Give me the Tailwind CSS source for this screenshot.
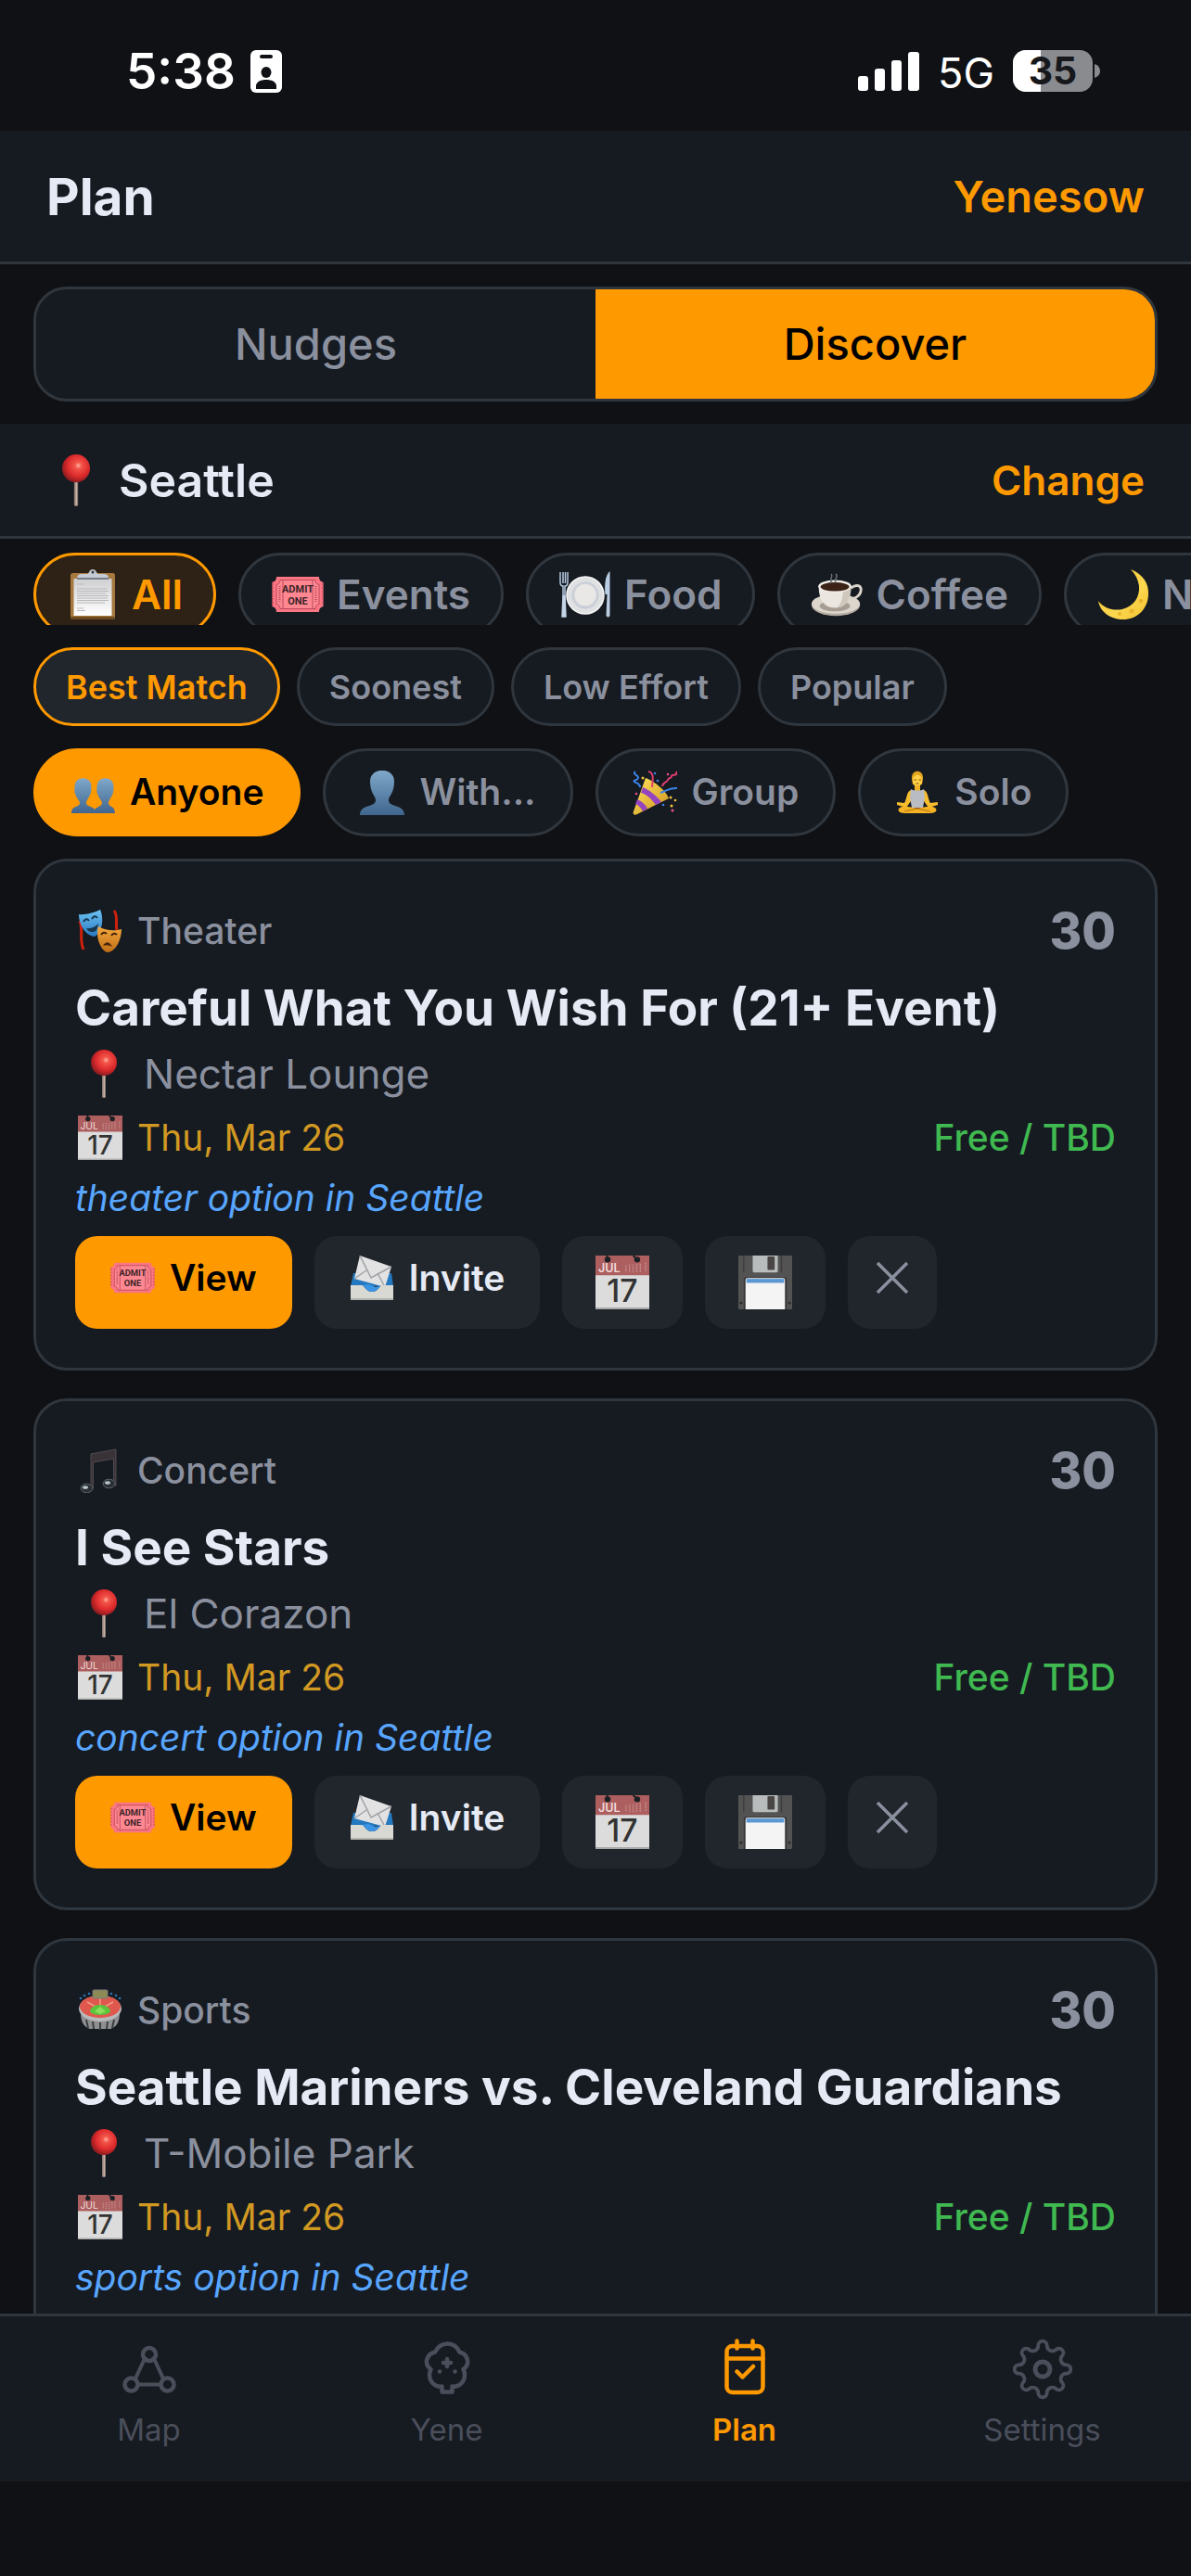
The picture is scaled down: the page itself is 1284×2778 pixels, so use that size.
<!DOCTYPE html>
<html lang="en">
<head>
  <meta charset="UTF-8" />
  <meta name="viewport" content="width=device-width, initial-scale=1" />
  <title>Plan - Discover</title>
  <script src="https://cdn.jsdelivr.net/npm/@tailwindcss/browser@4"></script>
  <style>
    body { font-family: Inter, 'Liberation Sans', sans-serif; }
  </style>
</head>
<body class="bg-[#0f1115] text-[#e6eaf4] h-screen flex flex-col overflow-hidden">

  <!-- Icon sprite -->
  <svg class="absolute size-0" aria-hidden="true">
    <defs>
      <radialGradient id="gPin" cx="0.58" cy="0.4" r="0.6">
        <stop offset="0" stop-color="#ffb3a0" /><stop offset="0.2" stop-color="#f4554a" /><stop offset="0.65" stop-color="#dc2a2c" /><stop offset="1" stop-color="#8f1c20" />
      </radialGradient>
      <linearGradient id="gBust" x1="0" y1="0" x2="0" y2="1"><stop offset="0" stop-color="#7fa8ca" /><stop offset="1" stop-color="#40658e" /></linearGradient>
      <linearGradient id="gMoon" x1="0" y1="0" x2="1" y2="1"><stop offset="0" stop-color="#f2b92c" /><stop offset="0.6" stop-color="#fcd84f" /><stop offset="1" stop-color="#f3c02f" /></linearGradient>
      <linearGradient id="gCone" x1="0" y1="0" x2="1" y2="1"><stop offset="0" stop-color="#ffe45c" /><stop offset="1" stop-color="#cf9420" /></linearGradient>
      <linearGradient id="gPaper" x1="0" y1="0" x2="0" y2="1"><stop offset="0" stop-color="#cfcfd2" /><stop offset="1" stop-color="#ffffff" /></linearGradient>
      <linearGradient id="gBlue" x1="0" y1="0" x2="0" y2="1"><stop offset="0" stop-color="#6cc4f5" /><stop offset="1" stop-color="#2a78bf" /></linearGradient>
      <linearGradient id="gGold" x1="0" y1="0" x2="0" y2="1"><stop offset="0" stop-color="#f4a93c" /><stop offset="1" stop-color="#c06d18" /></linearGradient>
    </defs>

    <symbol id="pin" viewBox="0 0 56 54">
      <rect x="26" y="26" width="4" height="27" rx="1.500" fill="#8d7b74" />
      <rect x="27.500" y="28" width="1.500" height="24" fill="#c9b3a6" />
      <circle cx="28" cy="15" r="14" fill="url(#gPin)" />
    </symbol>

    <symbol id="clipboard" viewBox="0 0 56 56">
      <rect x="4" y="5" width="48" height="50" rx="2.500" fill="#a6793f" />
      <rect x="4" y="52" width="48" height="3" rx="1" fill="#6f4b20" />
      <rect x="7.500" y="11" width="41" height="40" fill="url(#gPaper)" />
      <g stroke="#b9b9bd" stroke-width="1"><path d="M11 17h8M11 22h32M11 24.500h34M11 27h31M11 29.500h34M11 32h33M11 34.500h34M11 37h30M11 43h7M11 45.500h9" /></g>
      <path d="M11 11c0-4 2-5 6-5h5c2 0 2-5 6-5s4 5 6 5h5c4 0 6 1 6 5z" fill="#c5cad4" />
      <path d="M11 11h34" stroke="#5c6470" stroke-width="1.500" />
      <circle cx="28" cy="4" r="1.500" fill="#32353a" />
    </symbol>

    <symbol id="plate" viewBox="0 0 56 52">
      <circle cx="28" cy="27" r="20" fill="#dfe0e1" />
      <circle cx="28" cy="27" r="20" fill="none" stroke="#f7f7f7" stroke-width="1.500" />
      <circle cx="28" cy="27" r="14" fill="#d0d4da" stroke="#bfc8d4" />
      <circle cx="28" cy="26.500" r="11.500" fill="#e9e8e6" />
      <path d="M1 2v11q0 4 3 4v10l-1 23h4l-1-23V17q3 0 3-4V2M4 2v12M6.500 2v12" fill="none" stroke="#b7cbe2" stroke-width="1.500" />
      <path d="M3.500 27h3l.5 22q-2 3-4 0z" fill="#c5d4e6" />
      <path d="M54.500 1c-5 4-6 15-5 25h2l-1 23q2 3 4 0z" fill="#b9cde3" />
    </symbol>

    <symbol id="coffee" viewBox="0 0 58 50">
      <ellipse cx="28" cy="37" rx="27" ry="12" fill="#b5aca2" />
      <ellipse cx="28" cy="35.500" rx="27" ry="11" fill="#dcd6cd" />
      <ellipse cx="27" cy="38" rx="17" ry="6" fill="#a79d92" />
      <path d="M45 18c6-5 12-3 11 3s-7 9-14 9" fill="none" stroke="#d9d3ca" stroke-width="3" />
      <path d="M9 16c0 14 5 24 18 24s18-10 18-24z" fill="#ebe7e0" />
      <path d="M36 20c0 9-2 16-7 20 11-1 16-10 16-24z" fill="#cfc7bc" />
      <ellipse cx="27" cy="16" rx="18.500" ry="7" fill="#f1eee9" />
      <ellipse cx="27" cy="16.500" rx="16" ry="5" fill="#3b2116" />
      <path d="M24 12c-5-4 2-5-1-10M28 12c-3-4 4-6 0-10" fill="none" stroke="#6d7176" stroke-width="1.500" />
    </symbol>

    <symbol id="moon" viewBox="0 0 56 56">
      <path d="M36 1C49 6 56 16 55 29 54 45 42 55 28 55 14 55 3 47 1 35 7 43 17 46 27 44 39 41 46 31 45 19 44 12 41 6 36 1Z" fill="url(#gMoon)" />
      <circle cx="47" cy="35" r="2" fill="#e5ad28" /><circle cx="37" cy="46" r="2.500" fill="#e9b42c" /><circle cx="24" cy="49" r="2" fill="#e9b42c" />
    </symbol>

    <symbol id="people" viewBox="0 0 48 48">
      <path d="M1 46c0-9 9-6 9-11 0-3-3-4-5-10-1-2-1-10 1-13 3-5 12-5 15 0 2 3 2 11 0 14-2 5-4 6-4 9 0 5 10 2 10 11z" fill="url(#gBust)" />
      <path d="M25 46c0-8 9-6 9-11 0-3-3-4-5-10-1-2-1-10 1-13 3-5 12-5 15 0 2 3 2 11 0 14-2 5-4 6-4 9 0 5 7 2 7 11z" fill="url(#gBust)" />
    </symbol>

    <symbol id="person" viewBox="0 0 48 48">
      <path d="M0 48c0-12 17-8 17-16 0-4-3-5-5-12-1-5-2-11 1-15 4-7 18-7 22 0 3 4 2 10 1 15-2 7-5 8-5 12 0 8 17 4 17 16z" fill="url(#gBust)" />
    </symbol>

    <symbol id="party" viewBox="0 0 48 48">
      <path d="M14 8C21 10 36 21 39 30L5 47C1 49 0 46 1 44Z" fill="url(#gCone)" />
      <path d="M11 18C17 20 28 29 31 34L25 37C20 30 14 25 9 24ZM5 31C10 33 15 38 16 41L11 44C9 40 6 37 3 36Z" fill="#9444bf" />
      <path d="M3 1c-4 3 4 4 3 7s-6 2-4 4 6 1 6 6M30 24c5-1 9-6 18-5" fill="none" stroke="#3b83e8" stroke-width="2" />
      <path d="M17 1c6 1 5 8 4 17M47 1c2 6-5 2-5 5s-3 1-4 4-5 2-6 7" fill="none" stroke="#e23e6e" stroke-width="2" />
      <g fill="#f5c23c"><circle cx="11" cy="8" r="1.500" /><circle cx="41" cy="29" r="1.500" /><circle cx="42" cy="38" r="1.500" /><circle cx="46" cy="32" r="1.300" /></g>
      <g fill="#e85187"><circle cx="4" cy="25" r="1.300" /><circle cx="38" cy="4" r="1.300" /><circle cx="43" cy="43" r="1.500" /></g>
      <g fill="#3b83e8"><circle cx="24" cy="3" r="1.300" /><circle cx="27" cy="11" r="1.300" /><circle cx="33" cy="37" r="1.300" /></g>
    </symbol>

    <symbol id="lotus" viewBox="0 0 48 48">
      <path d="M18 9c-1-11 13-11 12 0l-1 6H19z" fill="#e3a51d" />
      <ellipse cx="24" cy="11" rx="5" ry="6.500" fill="#ffcf45" />
      <path d="M21 16h6v6h-6z" fill="#edb126" />
      <path d="M17 21c-5 2-4 9-7 14l-8-1v3l10 3 7-10zM31 21c5 2 4 9 7 14l8-1v3l-10 3-7-10z" fill="#f8bd2d" />
      <path d="M17 20c3 2 11 2 14 0l1 9-2 11H18l-2-11z" fill="#b9bcc2" />
      <path d="M4 41c3-4 13-2 20 0 7-2 17-4 20 0 2 4-3 5-8 5H12c-5 0-10-1-8-5z" fill="#f5b426" />
      <path d="M10 44l14-3 14 3" fill="none" stroke="#c98514" stroke-width="1.500" />
      <path d="M20.500 10h2.500M25.500 10h2.500M22.500 14h3" stroke="#7a4b10" stroke-width="1" />
    </symbol>

    <symbol id="masks" viewBox="0 0 48 48">
      <path d="M2 13c4 10-1 20 4 31M39 2c5 7 1 15 3 21" fill="none" stroke="#cf200c" stroke-width="3" />
      <path d="M1 6c7 1 17-2 23-5 4 9 3 24-6 29C8 29 1 17 1 6Z" fill="url(#gBlue)" />
      <path d="M6 14q3-5 6-1M15 11q3-5 6-1" fill="none" stroke="#173650" stroke-width="2" />
      <path d="M9 21q8 1 13-5-1 10-7 9-4 0-6-4z" fill="#173650" />
      <path d="M22 19c8 5 18 5 25 3 0 11-6 25-16 25-8-4-12-18-9-28Z" fill="url(#gGold)" />
      <path d="M25 28q3-4 6-1M36 29q3-4 6-1" fill="none" stroke="#472309" stroke-width="2" />
      <path d="M27 40q5-8 10 1-5-3-10-1z" fill="#472309" />
    </symbol>

    <symbol id="note" viewBox="0 0 48 48">
      <path d="M14 6L41 1v39h-2.500V11L16.500 15v28H14z" fill="#393338" stroke="#5b5359" stroke-width="0.800" />
      <ellipse cx="9.500" cy="43" rx="6.500" ry="4.800" fill="#2b3036" stroke="#5e6268" />
      <ellipse cx="33.500" cy="38" rx="6.500" ry="4.800" fill="#2b3036" stroke="#5e6268" />
      <ellipse cx="8" cy="42" rx="3" ry="1.800" fill="#b9c6ce" /><ellipse cx="32" cy="37" rx="3" ry="1.800" fill="#b9c6ce" />
    </symbol>

    <symbol id="stadium" viewBox="0 0 48 48">
      <path d="M3 26c0 10 3 16 10 18h22c7-2 10-8 10-18z" fill="#8e8f91" />
      <path d="M9 34l2 9M16 36l1 8M24 37v8M32 36l-1 8M39 34l-2 9" stroke="#3c3e41" stroke-width="2" />
      <ellipse cx="24" cy="22" rx="23" ry="14" fill="#b8b9ba" />
      <ellipse cx="24" cy="20" rx="22" ry="12" fill="#e0574d" />
      <path d="M10 15l9 5M38 15l-9 5M24 9v9" stroke="#f39b85" stroke-width="1.500" />
      <path d="M13 26c0-5 5-8 11-8s11 3 11 8c-5 4-17 4-22 0z" fill="#5cc33c" />
      <path d="M24 20l6 5-6 3-6-3z" fill="#8cdc5d" />
      <rect x="16" y="2" width="16" height="9" rx="1" fill="#8c8b56" stroke="#77787a" />
      <g fill="#2e74b8"><circle cx="3" cy="11" r="1.300" /><circle cx="7" cy="8" r="1.300" /><circle cx="12" cy="6" r="1.300" /><circle cx="45" cy="11" r="1.300" /><circle cx="41" cy="8" r="1.300" /><circle cx="36" cy="6" r="1.300" /></g>
    </symbol>

    <symbol id="floppy" viewBox="0 0 60 60">
      <rect width="60" height="60" rx="1" fill="#535353" />
      <path d="M6 0v19M48 0v19" stroke="#3d3d3d" stroke-width="1.500" />
      <path d="M16 0h28v17q0 2-2 2H18q-2 0-2-2z" fill="#b9bcbd" />
      <rect x="32.500" y="1" width="8" height="15" rx="1" fill="#4a4645" />
      <path d="M6 60V27q0-3 3-3h42q3 0 3 3v33z" fill="#363636" />
      <path d="M8 60V27q0-2 2-2h40q2 0 2 2v33z" fill="#f4f4f5" />
      <rect x="9" y="26" width="42" height="4.500" fill="#5b98d3" />
      <circle cx="3" cy="53" r="1.500" fill="#2c2c2c" /><circle cx="57" cy="53" r="1.500" fill="#2c2c2c" />
    </symbol>

    <symbol id="envelope" viewBox="0 0 48 48">
      <path d="M4 19h41l2 14H1z" fill="#2478bf" />
      <path d="M11 0L45 12 38 34 5 25Z" fill="#e2e2e3" />
      <path d="M11 0l12 24 22-12M5 25l13-9M38 34l-8-15" fill="none" stroke="#9fa1a5" stroke-width="1.500" />
      <path d="M1 32h12c3 0 4 7 11 7s8-7 11-7h12v16H1z" fill="#d9d9d4" />
      <path d="M13 32c3 0 4 7 11 7s8-7 11-7l-7 2-8-3z" fill="#3b95e4" />
      <path d="M1 47h46" stroke="#a9a9a3" stroke-width="1.500" />
    </symbol>
  </svg>

  <!-- Status bar -->
  <div class="h-[141px] shrink-0 flex items-center justify-between pt-3 pl-[136px] pr-[98px] text-white">
    <div class="flex items-center gap-4">
      <span class="text-[53px] leading-[64px] font-semibold">5:38</span>
      <svg class="w-[34px] h-[46px]" viewBox="0 0 34 46">
        <rect width="34" height="46" rx="6" fill="#fff" />
        <rect x="10" y="5" width="14" height="4" rx="2" fill="#0f1115" />
        <ellipse cx="17" cy="24" rx="5.500" ry="6" fill="#0f1115" />
        <path d="M6 42V38C7 34 11 32 17 32s10 2 11 6v4z" fill="#0f1115" />
      </svg>
    </div>
    <div class="flex items-center">
      <svg class="w-[66px] h-[42px]" viewBox="0 0 66 42" fill="#fff">
        <rect y="26" width="11" height="16" rx="3" /><rect x="18" y="18" width="11" height="24" rx="3" /><rect x="36" y="9" width="11" height="33" rx="3" /><rect x="54" width="12" height="42" rx="3" />
      </svg>
      <span class="ml-5 pt-1 text-[45px] leading-[54px]">5G</span>
      <svg class="ml-5 w-[94px] h-[45px]" viewBox="0 0 94 45">
        <clipPath id="cell"><rect width="86" height="45" rx="14" /></clipPath>
        <g clip-path="url(#cell)"><rect width="86" height="45" fill="#8a8b8e" /><rect width="30" height="45" fill="#fff" /></g>
        <path d="M88 15q6 2 6 7.500t-6 7.500z" fill="#8a8b8e" />
        <text x="43" y="37" text-anchor="middle" font-family="Inter, sans-serif" font-size="41" font-weight="700" fill="#17181c">35</text>
      </svg>
    </div>
  </div>

  <!-- Header -->
  <header class="shrink-0 h-36 px-[50px] flex items-center justify-between bg-[#161b22] border-b-3 border-[#30363d]">
    <h1 class="text-[55px] leading-[66px] font-bold">Plan</h1>
    <a href="#yenesow" class="text-[47px] leading-[60px] font-semibold text-[#ff9900]">Yenesow</a>
  </header>

  <main class="flex-1 min-h-0 overflow-hidden flex flex-col">
    <!-- Nudges / Discover -->
    <div class="shrink-0 py-6 px-9">
      <div class="grid grid-cols-2 h-[124px] rounded-[36px] border-3 border-[#30363d] bg-[#161b22] overflow-hidden text-[47px] font-medium">
        <button type="button" class="text-[#8b909e]">Nudges</button>
        <button type="button" class="bg-[#ff9900] text-black">Discover</button>
      </div>
    </div>

    <!-- Location -->
    <div class="shrink-0 h-31 px-[50px] flex items-center justify-between bg-[#161b22] border-b-3 border-[#30363d]">
      <div class="flex items-center gap-[14px] text-[50px] leading-[60px] font-semibold">
        <svg class="w-16 h-[58px]"><use href="#pin" /></svg>
        Seattle
      </div>
      <button type="button" class="text-[44px] font-semibold text-[#ff9900]">Change</button>
    </div>

    <!-- Category chips -->
    <div class="shrink-0 h-[93px] pt-[15px] pl-9 flex items-start gap-6 overflow-hidden text-[44px] font-semibold text-[#8b909e]">
      <button type="button" class="shrink-0 h-[90px] px-[33px] flex items-center gap-[14px] rounded-full border-3 border-[#ff9900] bg-[#2e2115] text-[#ff9900]"><svg class="size-14"><use href="#clipboard" /></svg>All</button>
      <button type="button" class="shrink-0 h-[90px] px-[33px] flex items-center gap-[14px] rounded-full border-3 border-[#30363d] bg-[#161b22]"><span data-icon="ticket" class="size-14"></span>Events</button>
      <button type="button" class="shrink-0 h-[90px] px-[33px] flex items-center gap-[14px] rounded-full border-3 border-[#30363d] bg-[#161b22]"><svg class="size-14"><use href="#plate" /></svg>Food</button>
      <button type="button" class="shrink-0 h-[90px] px-[33px] flex items-center gap-[14px] rounded-full border-3 border-[#30363d] bg-[#161b22]"><svg class="size-14"><use href="#coffee" /></svg>Coffee</button>
      <button type="button" class="shrink-0 h-[90px] px-[33px] flex items-center gap-[14px] rounded-full border-3 border-[#30363d] bg-[#161b22]"><svg class="size-14"><use href="#moon" /></svg>Nightlife</button>
    </div>

    <!-- Sort chips -->
    <div class="shrink-0 mt-6 px-9 flex gap-[18px] text-[36px] font-semibold text-[#8b909e]">
      <button type="button" class="h-[85px] px-8 rounded-full border-3 border-[#ff9900] bg-[#21262d] text-[#ff9900]">Best Match</button>
      <button type="button" class="h-[85px] px-8 rounded-full border-3 border-[#30363d] bg-[#161b22]">Soonest</button>
      <button type="button" class="h-[85px] px-8 rounded-full border-3 border-[#30363d] bg-[#161b22]">Low Effort</button>
      <button type="button" class="h-[85px] px-8 rounded-full border-3 border-[#30363d] bg-[#161b22]">Popular</button>
    </div>

    <!-- Company chips -->
    <div class="shrink-0 mt-6 px-9 flex gap-6 text-[39px] font-semibold text-[#8b909e]">
      <button type="button" class="h-[95px] px-[37px] flex items-center gap-4 rounded-full border-3 border-[#ff9900] bg-[#ff9900] text-black"><svg class="size-12"><use href="#people" /></svg>Anyone</button>
      <button type="button" class="h-[95px] px-[37px] flex items-center gap-4 rounded-full border-3 border-[#30363d] bg-[#161b22]"><svg class="size-12"><use href="#person" /></svg>With...</button>
      <button type="button" class="h-[95px] px-[37px] flex items-center gap-4 rounded-full border-3 border-[#30363d] bg-[#161b22]"><svg class="size-12"><use href="#party" /></svg>Group</button>
      <button type="button" class="h-[95px] px-[37px] flex items-center gap-4 rounded-full border-3 border-[#30363d] bg-[#161b22]"><svg class="size-12"><use href="#lotus" /></svg>Solo</button>
    </div>

    <!-- Event cards -->
    <div id="eventList" class="mt-6 px-9 flex flex-col gap-[30px]"></div>
  </main>

  <!-- Tab bar -->
  <nav class="shrink-0 h-[181px] mb-[102px] grid grid-cols-4 bg-[#161b22] border-t-3 border-[#30363d] text-[33px] leading-[40px] text-[#4a4e5a]">
    <a href="#map" class="pt-6 flex flex-col items-center gap-3">
      <svg class="w-16 h-[66px]" viewBox="0 4 64 66" fill="none" stroke="currentColor">
        <g stroke-width="4"><path d="M28 23.500L17 47M36 23.500L47 47M20 53.500h24" /></g>
        <g stroke-width="4.500"><circle cx="32" cy="21" r="7" /><circle cx="12.500" cy="53.500" r="7" fill="#161b22" /><circle cx="51.500" cy="53.500" r="7" fill="#161b22" /></g>
      </svg>
      Map
    </a>
    <a href="#yene" class="pt-6 flex flex-col items-center gap-3">
      <svg class="w-16 h-[66px]" viewBox="0 0 64 66" fill="none" stroke="currentColor" stroke-width="4.500" stroke-linejoin="round" stroke-linecap="round">
        <path d="M19 14.500C25 2.500 40 2.500 45.500 14.500 55 17 57 28 49.500 33 54 43 47 53 37.500 51.500V57.500H26.500V51.500C17 53 10 43 14.500 33 7 28 9 17 19 14.500Z" />
        <path d="M32 22v8M28 26h8" />
        <circle cx="24" cy="35.500" r="2.200" fill="currentColor" stroke="none" /><circle cx="40.500" cy="35.500" r="2.200" fill="currentColor" stroke="none" />
      </svg>
      Yene
    </a>
    <a href="#plan" class="pt-6 flex flex-col items-center gap-3 font-semibold text-[#ff9900]">
      <svg class="w-16 h-[66px]" viewBox="0 0 64 66" fill="none" stroke="currentColor" stroke-width="4.500" stroke-linejoin="round" stroke-linecap="round">
        <rect x="12.500" y="8" width="39" height="50" rx="6" />
        <path d="M12.500 21.500h39M23.500 2.500v8M40.500 2.500v8M23.500 35.500l6 6L41 30" />
      </svg>
      Plan
    </a>
    <a href="#settings" class="pt-6 flex flex-col items-center gap-3">
      <svg class="w-16 h-[66px]" viewBox="-32 -33 64 66" fill="none" stroke="currentColor" stroke-width="3.800">
        <path d="M-4.700 -25.600A4.700 4.700 0 0 1 4.700 -25.600A5.900 5.900 0 0 0 14.800 -21.400A4.700 4.700 0 0 1 21.400 -14.800A5.900 5.900 0 0 0 25.600 -4.700A4.700 4.700 0 0 1 25.600 4.700A5.900 5.900 0 0 0 21.400 14.800A4.700 4.700 0 0 1 14.800 21.400A5.900 5.900 0 0 0 4.700 25.600A4.700 4.700 0 0 1 -4.700 25.600A5.900 5.900 0 0 0 -14.800 21.400A4.700 4.700 0 0 1 -21.400 14.800A5.900 5.900 0 0 0 -25.600 4.700A4.700 4.700 0 0 1 -25.600 -4.700A5.900 5.900 0 0 0 -21.400 -14.800A4.700 4.700 0 0 1 -14.800 -21.400A5.900 5.900 0 0 0 -4.700 -25.600Z" />
        <circle r="8" stroke-width="5" />
      </svg>
      Settings
    </a>
  </nav>

  <script>
    // icons that carry lettering
    const ticket = `
      <svg class="size-full" viewBox="0 0 56 40">
        <path d="M5 1H51C51 5 53 6 55.500 7V33C53 34 51 35 51 39H5C5 35 3 34 .5 33V7C3 6 5 5 5 1Z" fill="#fb7583" />
        <path d="M1 8v24M55 8v24" stroke="#c9505f" stroke-width="1.500" stroke-dasharray="2 2" />
        <path d="M9 4.500H47C47 8 49 9 51 9.500V30.500C49 31 47 32 47 35.500H9C9 32 7 31 5 30.500V9.500C7 9 9 8 9 4.500Z" fill="#ff8791" stroke="#b94b5a" stroke-width="1" />
        <path d="M12 5v30M44 5v30" stroke="#b94b5a" stroke-width="1" />
        <path d="M8.500 11v18M47.500 11v18" stroke="#b94b5a" stroke-width="2" stroke-dasharray="1 1" />
        <text text-anchor="middle" font-family="Roboto, sans-serif" font-size="11" font-weight="700" fill="#3c2328"><tspan x="28" y="18">ADMIT</tspan><tspan x="28" y="31">ONE</tspan></text>
      </svg>`;
    const calendar = `
      <svg class="size-full" viewBox="0 0 60 60">
        <path d="M0 0h60v60H0z" fill="#dcdcdc" />
        <path d="M0 0h60v22H0z" fill="#ad5e5e" />
        <path d="M0 59h60" stroke="#a9a9a9" stroke-width="2" />
        <circle cx="13.500" cy="4.500" r="3.300" fill="#1b2024" /><circle cx="46.500" cy="4.500" r="3.300" fill="#1b2024" />
        <path d="M13 0v4M42 0l4 4" stroke="#1b2024" stroke-width="2" />
        <text x="3" y="19" font-family="Inter, sans-serif" font-size="13" fill="#f0dcdc">JUL</text>
        <path d="M34 11v8M38 10v9M42 10v9M46 9v10M50 9v9M56 8v9" stroke="#c99494" stroke-width="1.500" stroke-dasharray="1.500 1" />
        <text x="30" y="52" text-anchor="middle" font-family="Inter, sans-serif" font-size="35" font-weight="500" fill="#333333">17</text>
      </svg>`;

    const events = [
      { icon: 'masks', type: 'Theater', title: 'Careful What You Wish For (21+ Event)', venue: 'Nectar Lounge', date: 'Thu, Mar 26', price: 'Free / TBD', reason: 'theater option in Seattle', score: 30 },
      { icon: 'note', type: 'Concert', title: 'I See Stars', venue: 'El Corazon', date: 'Thu, Mar 26', price: 'Free / TBD', reason: 'concert option in Seattle', score: 30 },
      { icon: 'stadium', type: 'Sports', title: 'Seattle Mariners vs. Cleveland Guardians', venue: 'T-Mobile Park', date: 'Thu, Mar 26', price: 'Free / TBD', reason: 'sports option in Seattle', score: 30 },
    ];

    document.querySelector('[data-icon="ticket"]').innerHTML = ticket;

    document.getElementById('eventList').innerHTML = events.map(event => `
      <article class="shrink-0 p-[42px] rounded-[36px] border-3 border-[#30363d] bg-[#161b22] text-[39px] leading-[48px]">
        <div class="h-[66px] flex items-center justify-between text-[#8b909e]">
          <span class="flex items-center gap-4 pl-[3px] font-medium"><svg class="size-12"><use href="#${event.icon}" /></svg>${event.type}</span>
          <span class="text-[53px] font-extrabold">${event.score}</span>
        </div>
        <h2 class="mt-[17px] text-[53px] leading-[66px] font-bold">${event.title}</h2>
        <p class="mt-[11px] pl-[3px] flex items-center gap-[15px] text-[44px] leading-[54px] text-[#8b909e]"><svg class="w-14 h-[54px]"><use href="#pin" /></svg>${event.venue}</p>
        <div class="mt-[18px] flex items-center justify-between">
          <span class="flex items-center gap-4 pl-[3px] text-[#d29922]"><span class="size-12">${calendar}</span>${event.date}</span>
          <span class="font-medium text-[#3fb950]">${event.price}</span>
        </div>
        <p class="mt-[17px] italic text-[#58a6ff]">${event.reason}</p>
        <div class="mt-[17px] flex gap-6 font-semibold">
          <button type="button" class="px-[38px] py-[21px] flex items-start gap-4 rounded-3xl bg-[#ff9900] text-black"><span class="size-12">${ticket}</span>View</button>
          <button type="button" class="px-[38px] py-[21px] flex items-start gap-4 rounded-3xl bg-[#21262d]"><svg class="size-12"><use href="#envelope" /></svg>Invite</button>
          <button type="button" aria-label="Add to calendar" class="px-[35px] py-[21px] rounded-3xl bg-[#21262d]"><span class="block w-[60px] h-[58px]">${calendar}</span></button>
          <button type="button" aria-label="Save" class="px-[35px] py-[21px] rounded-3xl bg-[#21262d]"><svg class="w-[60px] h-[58px]"><use href="#floppy" /></svg></button>
          <button type="button" aria-label="Dismiss" class="px-6 py-[21px] flex items-start rounded-3xl bg-[#21262d] text-[#8b909e]"><svg class="size-12" viewBox="0 0 48 48" fill="none" stroke="currentColor" stroke-width="3.500"><path d="M8 8l32 32M40 8L8 40" /></svg></button>
        </div>
      </article>
    `).join('');
  </script>
</body>
</html>
